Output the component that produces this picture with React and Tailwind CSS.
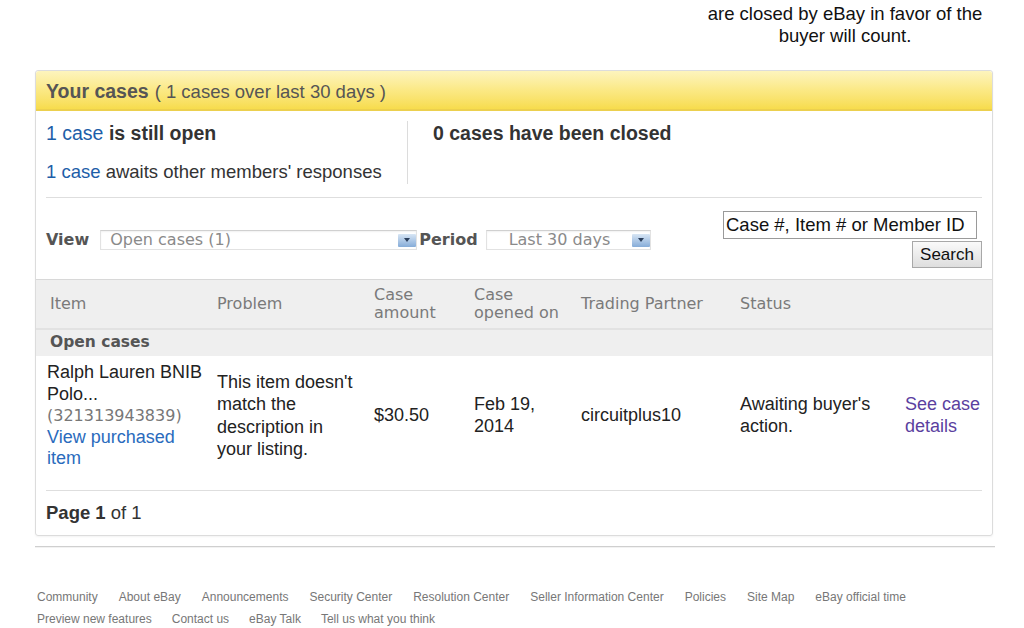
import React from 'react';

const arial = { fontFamily: '"Liberation Sans", Arial, sans-serif' };

const SelectArrow = () => (
  <span className="flex h-[13px] w-[18px] items-center justify-center rounded-[1px] bg-gradient-to-b from-[#d8e6f4] to-[#86acd8]">
    <svg width="6" height="4" viewBox="0 0 6 4">
      <path d="M0 0h6L3 4z" fill="#2b3f5c" />
    </svg>
  </span>
);

const FakeSelect = ({ label, width, textPad }) => (
  <div
    className={`flex h-[20px] items-center justify-between border border-[#e2e2e2] border-t-[#d0d0d0] bg-white shadow-[inset_0_1px_2px_rgba(0,0,0,0.06)] ${width}`}
  >
    <span className={`text-[16px] leading-[20px] text-[#8a8a8a] ${textPad}`}>{label}</span>
    <SelectArrow />
  </div>
);

const COLS = 'grid grid-cols-[170px_157px_100px_107px_159px_165px_1fr] pl-[11px]';

const FOOTER_ROWS = [
  ['Community', 'About eBay', 'Announcements', 'Security Center', 'Resolution Center', 'Seller Information Center', 'Policies', 'Site Map', 'eBay official time'],
  ['Preview new features', 'Contact us', 'eBay Talk', 'Tell us what you think'],
];

export default function App() {
  return (
    <div className="min-h-[628px] w-[1024px] overflow-hidden bg-white text-[#333]" style={arial}>
      {/* note at top right */}
      <div className="flex justify-end pr-[34px] pt-[3px]">
        <div className="w-[290px] text-center text-[18.5px] leading-[22px] text-[#111]">
          <p>are closed by eBay in favor of the</p>
          <p>buyer will count.</p>
        </div>
      </div>

      {/* cases panel */}
      <div className="ml-[35px] mt-[23px] w-[958px] rounded-[3px] border border-[#dcdcdc] shadow-[0_1px_2px_rgba(0,0,0,0.05)]">
        <div className="flex h-[40px] items-center rounded-t-[3px] border-b-2 border-[#ecd04e] bg-gradient-to-b from-[#fdf4bd] via-[#fbe985] to-[#f7dc4c] px-[10px] pt-[3px] text-[#555]">
          <span className="text-[19.5px] font-bold">Your cases</span>
          <span className="ml-[6px] text-[18.5px]">( 1 cases over last 30 days )</span>
        </div>

        {/* summary */}
        <div className="mx-[10px] flex border-b border-[#dedede] pb-[13px] pt-[10px]">
          <div className="w-[362px] border-r border-[#dcdcdc]">
            <p className="text-[19.5px] leading-[24px]">
              <a className="text-[#1d5ea8]">1 case</a> <span className="font-bold">is still open</span>
            </p>
            <p className="mt-[15px] text-[18.5px] leading-[24px]">
              <a className="text-[#1d5ea8]">1 case</a> awaits other members' responses
            </p>
          </div>
          <div className="pl-[25px]">
            <p className="text-[19.5px] font-bold leading-[24px]">0 cases have been closed</p>
          </div>
        </div>

        {/* filters */}
        <div className="flex items-center pb-[11px] pl-[10px] pr-[10px] pt-[13px]" style={{ fontFamily: '"DejaVu Sans", Verdana, sans-serif' }}>
          <span className="pt-[1px] text-[16px] font-bold text-[#555]">View</span>
          <div className="ml-[11px] pt-[1px]">
            <FakeSelect label="Open cases (1)" width="w-[317px]" textPad="pl-[9px]" />
          </div>
          <span className="ml-[2px] pt-[1px] text-[16px] font-bold text-[#555]">Period</span>
          <div className="ml-[8px] pt-[1px]">
            <FakeSelect label="Last 30 days" width="w-[165px]" textPad="pl-[22px]" />
          </div>
          <div className="ml-auto flex flex-col items-end" style={arial}>
            <div className="mr-[5px] flex h-[28px] w-[254px] items-center border border-[#9a9a9a] px-[2px] text-[18.5px] text-[#111]">
              Case #, Item # or Member ID
            </div>
            <button className="mt-[2px] h-[27px] w-[70px] border border-[#a8a8a8] bg-gradient-to-b from-[#fafafa] to-[#dedede] text-[17px] text-[#111]">
              Search
            </button>
          </div>
        </div>

        {/* table */}
        <div style={{ fontFamily: '"DejaVu Sans", Verdana, sans-serif' }}>
          <div className={`${COLS} h-[49px] items-center border-t border-[#d8d8d8] bg-[#efefef] text-[16px] leading-[18px] text-[#7a7a7a]`}>
            <span className="pl-[3px]">Item</span>
            <span>Problem</span>
            <span className="pr-[12px]">Case amount</span>
            <span className="pr-[12px]">Case opened on</span>
            <span>Trading Partner</span>
            <span>Status</span>
            <span />
          </div>
          <div className="flex h-[28px] items-center border-t-2 border-[#e2e2e2] bg-[#efefef] pl-[14px] pr-[6px] text-[15.5px] font-bold text-[#555]">
            Open cases
          </div>
        </div>

        <div className={`${COLS} items-center pb-[20px] pt-[6px] text-[18px] leading-[21.5px] text-[#222]`}>
          <div className="pr-[10px]">
            <p>Ralph Lauren BNIB Polo...</p>
            <p className="text-[16px] text-[#777]" style={{ fontFamily: '"DejaVu Sans", Verdana, sans-serif' }}>(321313943839)</p>
            <a className="text-[#2a6bbd]">View purchased item</a>
          </div>
          <p className="pr-[12px] leading-[22.3px]">This item doesn't match the description in your listing.</p>
          <p>$30.50</p>
          <p className="pr-[12px]">Feb 19, 2014</p>
          <p>circuitplus10</p>
          <p className="pr-[12px]">Awaiting buyer's action.</p>
          <a className="text-[#5b3f9f]">See case details</a>
        </div>

        <div className="mx-[10px] h-px bg-[#dedede]" />
        <div className="flex h-[44px] items-center pl-[10px] text-[18.5px] text-[#333]">
          <span className="font-bold">Page 1</span>
          <span className="ml-[5px]">of 1</span>
        </div>
      </div>

      {/* footer */}
      <div className="ml-[35px] mt-[10px] h-[2px] w-[960px] border-t border-[#cfcfcf] bg-[#f2f2f2]" />
      <div className="ml-[37px] mt-[38px] text-[12px] leading-[22px] text-[#777]">
        {FOOTER_ROWS.map((row, i) => (
          <div key={i} className={i === 0 ? 'flex gap-x-[21px]' : 'flex gap-x-[20px]'}>
            {row.map((link) => (
              <a key={link}>{link}</a>
            ))}
          </div>
        ))}
      </div>
    </div>
  );
}
